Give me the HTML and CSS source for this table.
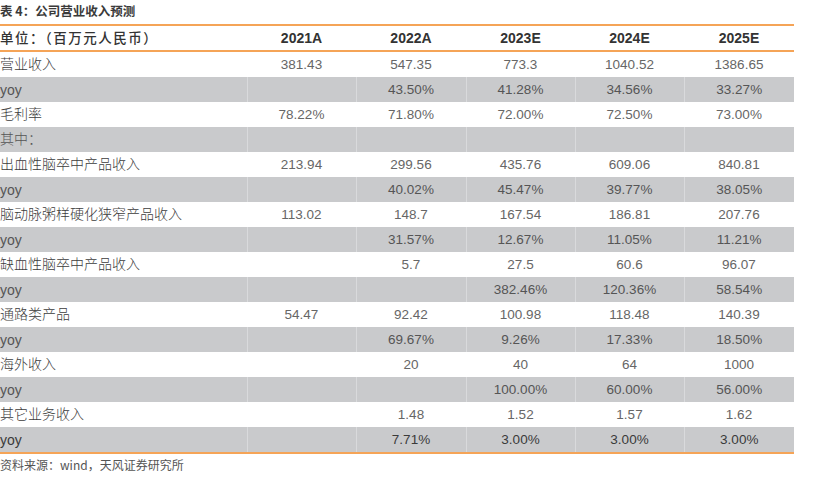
FILE: index.html
```html
<!DOCTYPE html>
<html lang="zh">
<head>
<meta charset="utf-8">
<link rel="stylesheet" href="styles.css">
</head>
<body>
<div class="page">
  <div class="title">表 4：公司营业收入预测</div>
  <table class="fc">
    <colgroup>
      <col class="c0"><col class="c1"><col class="c2"><col class="c3"><col class="c4"><col class="c5">
    </colgroup>
    <thead>
      <tr><th class="lab">单位：（百万元人民币）</th><th>2021A</th><th>2022A</th><th>2023E</th><th>2024E</th><th>2025E</th></tr>
    </thead>
    <tbody>
      <tr><td class="lab">营业收入</td><td>381.43</td><td>547.35</td><td>773.3</td><td>1040.52</td><td>1386.65</td></tr>
      <tr class="g"><td class="lab yoy">yoy</td><td></td><td>43.50%</td><td>41.28%</td><td>34.56%</td><td>33.27%</td></tr>
      <tr><td class="lab">毛利率</td><td>78.22%</td><td>71.80%</td><td>72.00%</td><td>72.50%</td><td>73.00%</td></tr>
      <tr class="g"><td class="lab">其中：</td><td></td><td></td><td></td><td></td><td></td></tr>
      <tr><td class="lab">出血性脑卒中产品收入</td><td>213.94</td><td>299.56</td><td>435.76</td><td>609.06</td><td>840.81</td></tr>
      <tr class="g"><td class="lab yoy">yoy</td><td></td><td>40.02%</td><td>45.47%</td><td>39.77%</td><td>38.05%</td></tr>
      <tr><td class="lab">脑动脉粥样硬化狭窄产品收入</td><td>113.02</td><td>148.7</td><td>167.54</td><td>186.81</td><td>207.76</td></tr>
      <tr class="g"><td class="lab yoy">yoy</td><td></td><td>31.57%</td><td>12.67%</td><td>11.05%</td><td>11.21%</td></tr>
      <tr><td class="lab">缺血性脑卒中产品收入</td><td></td><td>5.7</td><td>27.5</td><td>60.6</td><td>96.07</td></tr>
      <tr class="g"><td class="lab yoy">yoy</td><td></td><td></td><td>382.46%</td><td>120.36%</td><td>58.54%</td></tr>
      <tr><td class="lab">通路类产品</td><td>54.47</td><td>92.42</td><td>100.98</td><td>118.48</td><td>140.39</td></tr>
      <tr class="g"><td class="lab yoy">yoy</td><td></td><td>69.67%</td><td>9.26%</td><td>17.33%</td><td>18.50%</td></tr>
      <tr><td class="lab">海外收入</td><td></td><td>20</td><td>40</td><td>64</td><td>1000</td></tr>
      <tr class="g"><td class="lab yoy">yoy</td><td></td><td></td><td>100.00%</td><td>60.00%</td><td>56.00%</td></tr>
      <tr><td class="lab">其它业务收入</td><td></td><td>1.48</td><td>1.52</td><td>1.57</td><td>1.62</td></tr>
      <tr class="g dark"><td class="lab yoy">yoy</td><td></td><td>7.71%</td><td>3.00%</td><td>3.00%</td><td>3.00%</td></tr>
    </tbody>
  </table>
  <div class="source">资料来源：wind，天风证券研究所</div>
</div>
</body>
</html>
```

FILE: styles.css
```css
html, body {
  margin: 0;
  padding: 0;
  background: #ffffff;
}
body {
  font-family: "Liberation Sans", "Noto Sans CJK SC", sans-serif;
  color: #333333;
}
.page {
  width: 794px;
}
.title {
  height: 24px;
  line-height: 21px;
  font-size: 12.5px;
  font-weight: bold;
  color: #3a3a3a;
  font-family: "Noto Sans CJK SC", sans-serif;
}
.fc {
  width: 794px;
  border-collapse: collapse;
  table-layout: fixed;
  border-top: 2px solid #f5a457;
  border-bottom: 2px solid #f5a457;
}
.c0 { width: 247px; }
.c1 { width: 109px; }
.c2 { width: 110px; }
.c3 { width: 109px; }
.c4 { width: 109px; }
.c5 { width: 110px; }
.fc th {
  height: 24px;
  padding: 0;
  font-size: 14px;
  font-weight: bold;
  color: #333333;
  text-align: center;
  border-bottom: 2px solid #f5a457;
}
.fc th.lab {
  font-family: "Noto Sans CJK SC", sans-serif;
  font-weight: 500;
  font-size: 13.5px;
  letter-spacing: 1.5px;
  vertical-align: top;
  line-height: 23px;
}
.fc td {
  height: 25px;
  padding: 0;
  font-size: 13.5px;
  color: #666666;
  text-align: center;
  vertical-align: middle;
}
.fc .lab {
  text-align: left;
  padding-left: 0;
}
.fc td.lab {
  font-family: "Noto Sans CJK SC", sans-serif;
  font-size: 14px;
  font-weight: 300;
  color: #3c3c3c;
  vertical-align: top;
  line-height: 23px;
}
.fc td.yoy {
  font-family: "Liberation Sans", sans-serif;
  font-weight: normal;
  color: #555555;
  vertical-align: middle;
  line-height: normal;
}
.fc tr.g td {
  background: #c9cacc;
  color: #555555;
  border-left: 1px solid #d9dadc;
}
.fc tr.g td:first-child {
  border-left: none;
}
.fc tr.dark td {
  color: #3a3a3a;
}
.source {
  padding-top: 2px;
  font-size: 12px;
  line-height: 18px;
  color: #555555;
  font-family: "Noto Sans CJK SC", sans-serif;
}
```
